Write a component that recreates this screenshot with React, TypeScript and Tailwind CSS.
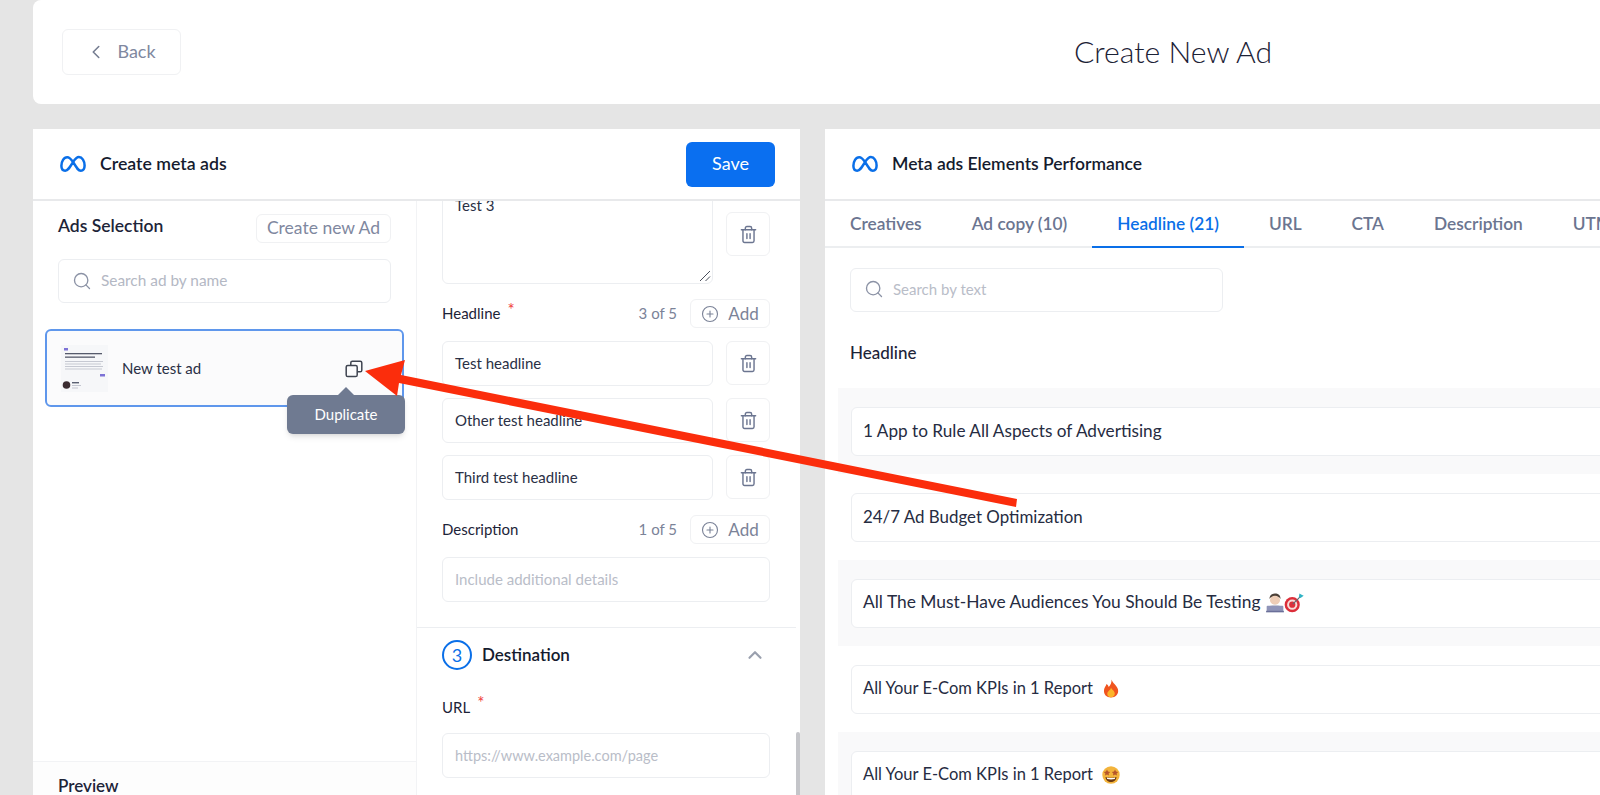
import { ChevronLeft, ChevronUp, CirclePlus, Search, Trash2 } from "lucide-react";
import type { ReactNode } from "react";

const MetaLogo = () => (
  <svg width="26" height="18" viewBox="0 0 26 18" fill="none" className="shrink-0">
    <path
      d="M7.2 2.2C3.8 2.2 1.4 6.6 1.4 10.8C1.4 13.9 3 15.8 5.2 15.8C7.8 15.8 9.4 13.2 13 7.2C15.4 3.4 16.8 2.1 18.9 2.1C22.2 2.1 24.6 5.9 24.6 10.6C24.6 13.8 23 15.8 20.8 15.8C18.2 15.8 16.6 12.9 13.2 7.2C10.9 3.7 9.4 2.2 7.2 2.2Z"
      stroke="#0a6fe8"
      strokeWidth="2.5"
    />
  </svg>
);

const DuplicateIcon = () => (
  <svg width="18" height="18" viewBox="0 0 18 18" fill="none" stroke="#3f4450" strokeWidth="1.5">
    <rect x="1.2" y="5.4" width="11" height="11.2" rx="1.6" />
    <path d="M5.8 5.2V2.8C5.8 1.9 6.5 1.3 7.4 1.3H15.2C16.1 1.3 16.8 1.9 16.8 2.8V10.2C16.8 11.1 16.1 11.8 15.2 11.8H12.4" />
  </svg>
);

const Thumb = () => (
  <svg width="47" height="47" viewBox="0 0 47 47" className="shrink-0 blur-[0.4px]">
    <rect width="47" height="47" fill="#f6f7f9" />
    <rect x="3" y="3" width="4" height="2.5" fill="#7d72d6" />
    <rect x="4" y="8" width="37" height="1.3" fill="#565b6c" />
    <rect x="4" y="11.5" width="30" height="1.3" fill="#565b6c" />
    <rect x="4" y="16" width="38" height="1" fill="#c6c9d2" />
    <rect x="4" y="18.5" width="36" height="1" fill="#c6c9d2" />
    <rect x="4" y="21" width="38" height="1" fill="#c6c9d2" />
    <rect x="4" y="23.5" width="37" height="1" fill="#c6c9d2" />
    <rect x="39" y="29" width="5" height="2.5" fill="#7d72d6" />
    <circle cx="5.5" cy="40" r="3.8" fill="#3b2c30" />
    <rect x="11" y="37" width="7" height="1.4" fill="#5a6072" />
    <rect x="11" y="40" width="9" height="1" fill="#c3c6d0" />
    <rect x="11" y="42.5" width="6" height="1" fill="#c3c6d0" />
  </svg>
);

const Fire = () => (
  <svg width="16" height="19" viewBox="0 0 16 19" className="ml-[10px] shrink-0">
    <path d="M8.5 0.5C9.5 4 14 6.5 15 10.5C16 15 12.5 18.5 8 18.5C3.5 18.5 0.5 15.5 1 11C1.300 8.500 3 7 3.500 5C5 6 5.500 7 5.700 8C7.500 6 8.800 3.500 8.500 0.500Z" fill="#f0541e" />
    <path d="M8 8.500C8.500 10.500 12 12 11.800 14.800C11.600 17 10 18.300 8 18.300C5.800 18.300 4.200 16.800 4.300 14.700C4.400 13 5.500 12.500 6 11.500C7 11.200 7.800 10 8 8.500Z" fill="#fbb42a" />
  </svg>
);

const StarFace = () => (
  <svg width="18" height="18" viewBox="0 0 18 18" className="ml-[9px] shrink-0">
    <circle cx="9" cy="9" r="8.700" fill="#f3b43c" />
    <path d="M3.500 11C6.500 12 11.500 12 14.500 11C14.200 14.500 11.800 16 9 16C6.200 16 3.800 14.500 3.500 11Z" fill="#6b3a12" />
    <path d="M4.800 11.500C7.500 12.200 10.500 12.200 13.200 11.500L12.800 13C10.500 13.500 7.500 13.500 5.200 13Z" fill="#fff" />
    <path d="M5 3.500L6 5.600L8.200 5.900L6.600 7.400L7 9.600L5 8.500L3 9.600L3.400 7.400L1.800 5.900L4 5.600Z" fill="#b5562a" />
    <path d="M13 3.500L14 5.600L16.200 5.900L14.600 7.400L15 9.600L13 8.500L11 9.600L11.400 7.400L9.800 5.900L12 5.600Z" fill="#b5562a" />
  </svg>
);

const TechTarget = () => (
  <svg width="38" height="20" viewBox="0 0 34 18" className="ml-[5px] shrink-0">
    <path d="M3 5.500C3 2 5.200 0.500 8 0.500C10.800 0.500 13 2 13 5.500L12 4H4Z" fill="#4b4038" />
    <ellipse cx="8" cy="6.500" rx="4.500" ry="4" fill="#eecdb6" />
    <path d="M1.500 16C1.500 12 4 10.500 8 10.500C12 10.500 14.500 12 14.500 16Z" fill="#d8d9de" />
    <rect x="0.500" y="11.500" width="15" height="5" rx="0.800" fill="#8f94b8" />
    <rect x="0" y="16" width="16" height="1.400" fill="#6a6f99" />
    <circle cx="23.500" cy="10.500" r="6.800" fill="#dc2e3a" />
    <circle cx="23.500" cy="10.500" r="4.600" fill="#f7dcd8" />
    <circle cx="23.500" cy="10.500" r="2.800" fill="#dc2e3a" />
    <path d="M24 10L31 3" stroke="#5e6b74" strokeWidth="1" />
    <path d="M29.500 3.500L30 0.500L32 1.500L33.800 2.500L31 4.500Z" fill="#2fb3c5" />
  </svg>
);

const DeleteButton = () => (
  <button className="flex h-[44px] w-[44px] shrink-0 items-center justify-center rounded-md border border-[#f0f1f3] bg-white">
    <Trash2 size={19} strokeWidth={1.8} className="text-[#6b7590]" />
  </button>
);

const FieldHeader = ({ label, count, required }: { label: string; count: string; required?: boolean }) => (
  <div className="flex h-[29px] items-center">
    <span className="text-[15px] text-[#1d2438]">{label}</span>
    {required && <span className="ml-[7px] -mt-[8px] text-[17px] text-[#f0413c]">*</span>}
    <span className="ml-auto text-[15px] text-[#7b8398]">{count}</span>
    <button className="ml-[13px] flex h-[29px] w-[80px] items-center justify-center gap-[9px] rounded-md border border-[#f0f1f3] text-[17px] text-[#7b8398]">
      <CirclePlus size={18} strokeWidth={1.5} />
      Add
    </button>
  </div>
);

const HeadlineField = ({ text }: { text: string }) => (
  <div className="flex gap-[13px]">
    <div className="flex h-[45px] flex-1 items-center rounded-md border border-[#eceef1] pl-[12px] text-[15px] text-[#2a3045]">
      {text}
    </div>
    <DeleteButton />
  </div>
);

const ListItem = ({ striped, children }: { striped?: boolean; children: ReactNode }) => (
  <div className={striped ? "h-[86px] bg-[#f9f9fa] py-[19px] pl-[13px]" : "h-[86px] bg-white py-[19px] pl-[13px]"}>
    <div className="flex h-[49px] w-[800px] items-center rounded-md border border-[#eceef1] bg-white pb-[2px] pl-[11px] text-[17.4px] text-[#262c42]">
      {children}
    </div>
  </div>
);

const tabs = ["Creatives", "Ad copy (10)", "Headline (21)", "URL", "CTA", "Description", "UTM"];

export default function App() {
  return (
    <div
      className="relative h-[795px] w-[1600px] overflow-hidden bg-[#e5e5e5] pl-[33px]"
      style={{ fontFamily: '"Lato", "Open Sans", sans-serif' }}
    >
      <header className="flex h-[104px] items-center rounded-l-lg bg-white pl-[29px]">
        <button className="flex h-[46px] w-[119px] items-center justify-center gap-[10px] rounded-md border border-[#f0f1f3] pb-[1px] pr-[2px] text-[18px] text-[#7f88a0]">
          <ChevronLeft size={22} strokeWidth={1.7} className="text-[#747c90]" />
          Back
        </button>
        <h1 className="ml-[893px] text-[30.2px] font-light text-[#1c2236]">Create New Ad</h1>
      </header>

      <div className="mt-[25px] flex gap-[25px]">
        <section className="flex h-[666px] w-[767px] shrink-0 flex-col bg-white">
          <div className="flex h-[72px] shrink-0 items-center border-b-2 border-[#e8e9eb] pl-[27px] pr-[25px]">
            <MetaLogo />
            <span className="ml-[14px] text-[17.7px] font-semibold text-[#151b2e]">Create meta ads</span>
            <button className="ml-auto h-[45px] w-[89px] rounded-md bg-[#0a6ff0] pb-[1px] text-[18px] text-white">Save</button>
          </div>

          <div className="flex min-h-0 flex-1">
            <div className="flex w-[384px] shrink-0 flex-col border-r border-[#f2f3f5]">
              <div className="flex-1 pl-[25px] pr-[25px] pt-[13px]">
                <div className="flex h-[29px] items-center justify-between">
                  <span className="pb-[5px] text-[17.5px] font-semibold text-[#1d2438]">Ads Selection</span>
                  <button className="h-[29px] w-[135px] rounded-md border border-[#f0f1f3] text-[17.5px] text-[#7f88a0]">
                    Create new Ad
                  </button>
                </div>
                <div className="mt-[16px] flex h-[44px] items-center gap-[9px] rounded-md border border-[#eceef1] pb-[1px] pl-[13px] text-[15.4px] text-[#b4b8c4]">
                  <Search size={20} strokeWidth={1.6} className="text-[#8b92a5]" />
                  Search ad by name
                </div>
                <div className="relative -mx-[13px] mt-[26px] flex h-[78px] items-center rounded-md border-2 border-[#5f97ec] bg-[#fbfbfc] pl-[14px] pr-[39px]">
                  <Thumb />
                  <span className="ml-[14px] text-[15px] text-[#2a3045]">New test ad</span>
                  <span className="ml-auto flex pt-[1px]">
                    <DuplicateIcon />
                  </span>
                  <div className="absolute left-[240px] top-[64px] flex h-[39px] w-[118px] items-center justify-center rounded-md bg-[#6f7a91] text-[15px] text-white shadow-md">
                    <span className="absolute -top-[8px] left-[51px] h-0 w-0 border-x-[8px] border-b-[8px] border-x-transparent border-b-[#6f7a91]" />
                    Duplicate
                  </div>
                </div>
              </div>
              <div className="h-[34px] shrink-0 border-t border-[#f2f3f5] bg-[#fdfdfd] pl-[25px] pt-[15px] text-[17px] font-semibold leading-[18px] text-[#1d2438]">
                Preview
              </div>
            </div>

            <div className="relative min-w-0 flex-1 overflow-hidden">
              <div className="-mt-[17px] pr-[4px]">
                <div className="pl-[25px] pr-[26px]">
                  <div className="flex items-start gap-[13px]">
                    <div className="relative h-[100px] w-[271px]">
                      <textarea
                        readOnly
                        value="Test 3"
                        className="h-full w-full resize-none rounded-md border border-[#eceef1] pl-[12px] pt-[9px] text-[15px] text-[#2a3045] outline-none"
                      />
                      <svg width="12" height="12" viewBox="0 0 12 12" className="absolute bottom-[2px] right-[2px]" stroke="#4a4f5c" strokeWidth="1">
                        <path d="M1 11L11 1M6.500 11L11 6.500" />
                      </svg>
                    </div>
                    <div className="mt-[28px]">
                      <DeleteButton />
                    </div>
                  </div>
                  <div className="mt-[15px]">
                    <FieldHeader label="Headline" count="3 of 5" required />
                  </div>
                  <div className="mt-[13px] flex flex-col gap-[12px]">
                    <HeadlineField text="Test headline" />
                    <HeadlineField text="Other test headline" />
                    <HeadlineField text="Third test headline" />
                  </div>
                  <div className="mt-[15px]">
                    <FieldHeader label="Description" count="1 of 5" />
                  </div>
                  <div className="mt-[13px] flex h-[45px] items-center rounded-md border border-[#eceef1] pl-[12px] text-[15px] text-[#b9bdc8]">
                    Include additional details
                  </div>
                </div>
                <div className="mt-[25px] border-t border-[#eceef1] pl-[25px] pr-[26px] pt-[12px]">
                  <div className="flex h-[30px] items-center">
                    <span className="flex h-[30px] w-[30px] items-center justify-center rounded-full border-2 border-[#0a6fe8] text-[18px] text-[#0a6fe8]">
                      3
                    </span>
                    <span className="ml-[10px] text-[17px] font-semibold text-[#151b2e]">Destination</span>
                    <ChevronUp size={22} strokeWidth={2.4} className="ml-auto mr-[4px] text-[#9aa0ae]" />
                  </div>
                  <div className="mt-[27px] flex h-[20px] items-center text-[15px] text-[#1d2438]">
                    URL
                    <span className="ml-[7px] -mt-[8px] text-[17px] text-[#f0413c]">*</span>
                  </div>
                  <div className="mt-[16px] flex h-[45px] items-center rounded-md border border-[#eceef1] pl-[12px] text-[14.5px] text-[#b9bdc8]">
                    https://www.example.com/page
                  </div>
                </div>
              </div>
              <div className="absolute right-0 top-[531px] h-[70px] w-[4px] rounded-sm bg-[#c4c5c9]" />
            </div>
          </div>
        </section>

        <section className="flex h-[666px] min-w-0 flex-1 flex-col overflow-hidden bg-white">
          <div className="flex h-[72px] shrink-0 items-center border-b-2 border-[#e8e9eb] pl-[27px]">
            <MetaLogo />
            <span className="ml-[14px] text-[17.5px] font-semibold text-[#151b2e]">Meta ads Elements Performance</span>
          </div>
          <div className="flex h-[47px] shrink-0 border-b-2 border-[#eceef0]">
            {tabs.map((tab) => (
              <span
                key={tab}
                className={
                  tab === "Headline (21)"
                    ? "-mb-[2px] flex shrink-0 items-center whitespace-nowrap border-b-2 border-[#0a6fe8] px-[25px] text-[17.3px] font-semibold text-[#0a6fe8]"
                    : "flex shrink-0 items-center whitespace-nowrap px-[25px] text-[17.3px] font-semibold text-[#6b7590]"
                }
              >
                {tab}
              </span>
            ))}
          </div>
          <div className="ml-[25px] mt-[20px] flex h-[44px] w-[373px] shrink-0 items-center gap-[9px] rounded-md border border-[#eceef1] pb-[2px] pl-[13px] text-[15px] text-[#b9bdc8]">
            <Search size={20} strokeWidth={1.6} className="text-[#8b92a5]" />
            Search by text
          </div>
          <div className="ml-[25px] mt-[31px] flex h-[20px] shrink-0 items-center text-[17px] font-medium text-[#1d2438]">
            Headline
          </div>
          <div className="ml-[13px] mt-[25px]">
            <ListItem striped>
              <span className="text-[17.2px]">1 App to Rule All Aspects of Advertising</span>
            </ListItem>
            <ListItem>
              <span className="text-[16.9px]">24/7 Ad Budget Optimization</span>
            </ListItem>
            <ListItem striped>
              All The Must-Have Audiences You Should Be Testing
              <TechTarget />
            </ListItem>
            <ListItem>
              <span className="text-[16.5px]">All Your E-Com KPIs in 1 Report</span>
              <Fire />
            </ListItem>
            <ListItem striped>
              <span className="text-[16.5px]">All Your E-Com KPIs in 1 Report</span>
              <StarFace />
            </ListItem>
          </div>
        </section>
      </div>

      {/* annotation arrow on top of the screenshot */}
      <svg width="1600" height="795" viewBox="0 0 1600 795" className="pointer-events-none absolute left-0 top-0">
        <polygon
          points="365,371 405,360 401,375 1017,499 1016,507 399,383 397,396"
          fill="#fb2d0c"
        />
      </svg>
    </div>
  );
}
